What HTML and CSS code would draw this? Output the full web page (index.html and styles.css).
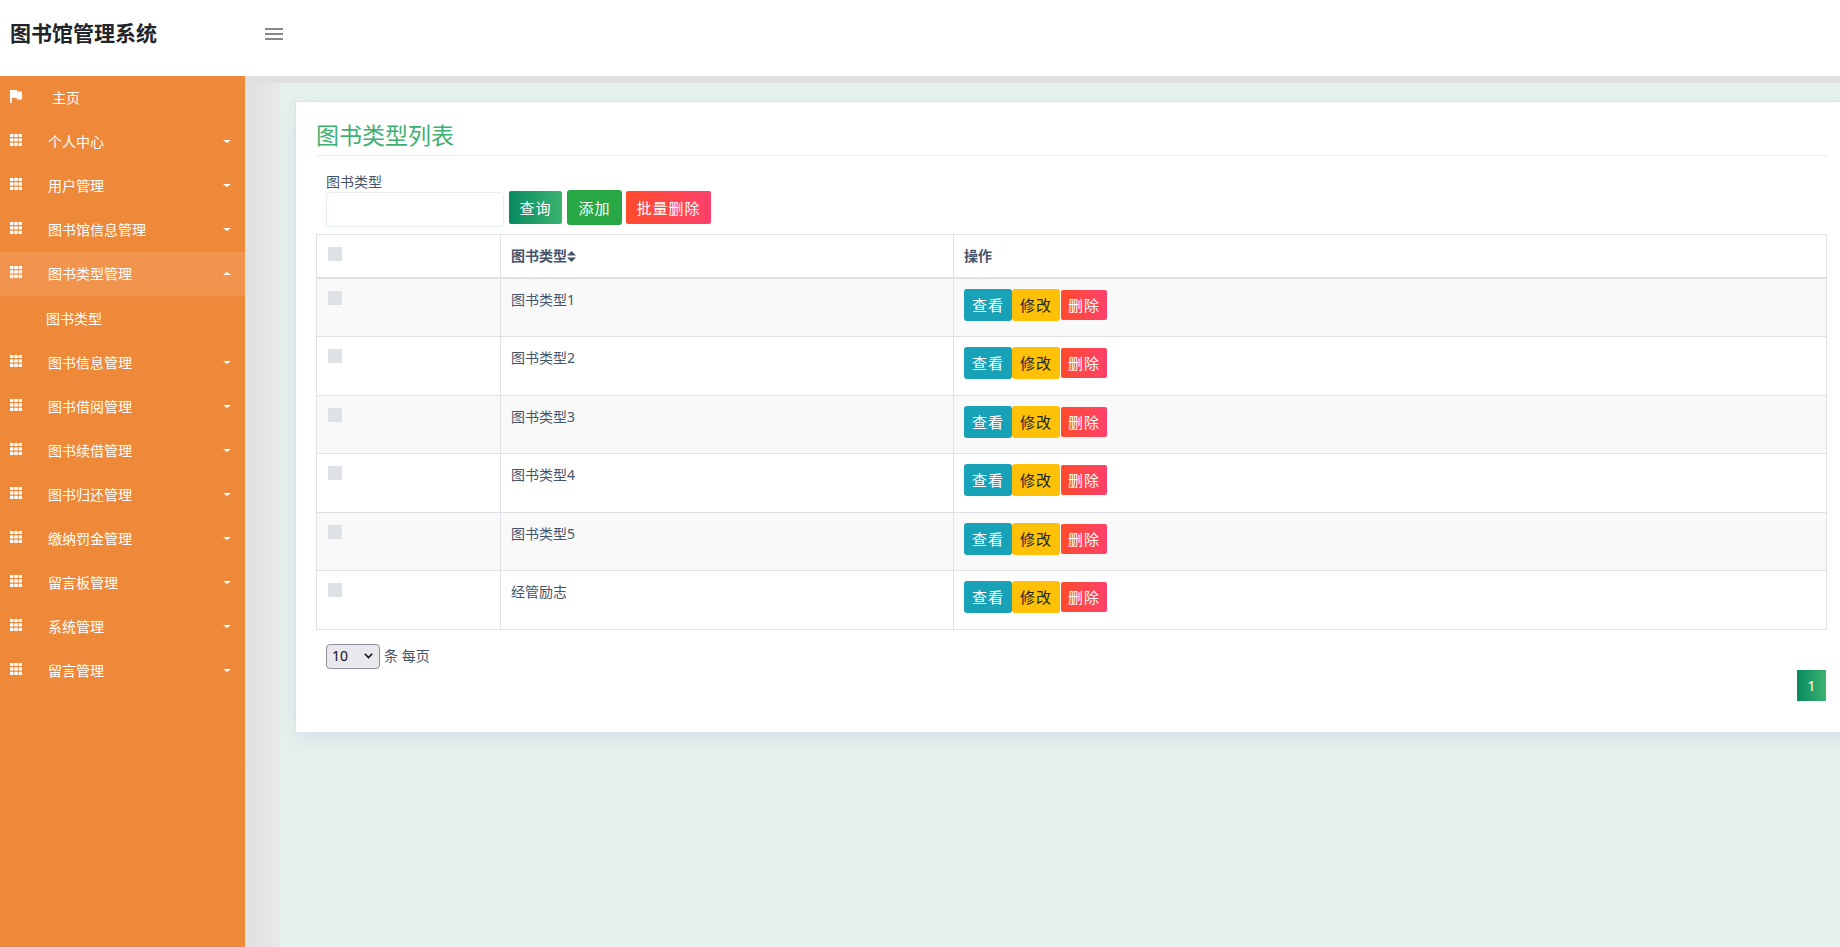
FILE: index.html
```
<!DOCTYPE html>
<html lang="zh-CN">
<head>
<meta charset="utf-8">
<title>图书馆管理系统</title>
<link rel="stylesheet" href="styles.css">
</head>
<body>
<svg class="defs" width="0" height="0">
  <symbol id="grid" viewBox="0 0 12 12"><path d="M0 0h3.4v3H0zM4.3 0h3.4v3H4.3zM8.6 0H12v3H8.6zM0 4.2h3.4v3.400H0zM4.3 4.2h3.4v3.400H4.3zM8.6 4.2H12v3.400H8.6zM0 8.8h3.4V12H0zM4.3 8.8h3.4V12H4.3zM8.6 8.8H12V12H8.6z"/></symbol>
</svg>
<header class="topbar">
  <h1 class="brand">图书馆管理系统</h1>
  <svg class="burger" viewBox="0 0 18 12"><path d="M0 0h18v2H0zM0 5h18v2H0zM0 10h18v2H0z"/></svg>
</header>
<div class="layout">
  <nav class="sidebar">
    <a class="item home"><svg class="icon flag" viewBox="0 0 12 13"><path d="M0 0h7l.4 1.6H12v7.8H7L6.600 7.800H1.700V13H0z"/></svg><span>主页</span></a>
    <a class="item"><svg class="icon"><use href="#grid"/></svg><span>个人中心</span><i class="caret"></i></a>
    <a class="item"><svg class="icon"><use href="#grid"/></svg><span>用户管理</span><i class="caret"></i></a>
    <a class="item"><svg class="icon"><use href="#grid"/></svg><span>图书馆信息管理</span><i class="caret"></i></a>
    <a class="item open"><svg class="icon"><use href="#grid"/></svg><span>图书类型管理</span><i class="caret"></i></a>
    <a class="subitem">图书类型</a>
    <a class="item"><svg class="icon"><use href="#grid"/></svg><span>图书信息管理</span><i class="caret"></i></a>
    <a class="item"><svg class="icon"><use href="#grid"/></svg><span>图书借阅管理</span><i class="caret"></i></a>
    <a class="item"><svg class="icon"><use href="#grid"/></svg><span>图书续借管理</span><i class="caret"></i></a>
    <a class="item"><svg class="icon"><use href="#grid"/></svg><span>图书归还管理</span><i class="caret"></i></a>
    <a class="item"><svg class="icon"><use href="#grid"/></svg><span>缴纳罚金管理</span><i class="caret"></i></a>
    <a class="item"><svg class="icon"><use href="#grid"/></svg><span>留言板管理</span><i class="caret"></i></a>
    <a class="item"><svg class="icon"><use href="#grid"/></svg><span>系统管理</span><i class="caret"></i></a>
    <a class="item"><svg class="icon"><use href="#grid"/></svg><span>留言管理</span><i class="caret"></i></a>
  </nav>
  <main class="page">
    <div class="content">
      <section class="card">
        <h2 class="title">图书类型列表</h2>
        <div class="filters">
          <label class="field"><span>图书类型</span><input class="text" type="text"></label>
          <button class="btn query">查询</button>
          <button class="btn add">添加</button>
          <button class="btn danger">批量删除</button>
        </div>
        <table class="list">
          <colgroup><col class="c-check"><col class="c-name"><col></colgroup>
          <thead><tr><th><i class="check"></i></th><th><div class="sort">图书类型<svg viewBox="0 0 9 11"><path d="M4.500 0L9 4.500H0zM0 6.500h9L4.500 11z"/></svg></div></th><th>操作</th></tr></thead>
          <tbody>
            <tr><td><i class="check"></i></td><td>图书类型1</td><td><div class="ops"><button class="op view">查看</button><button class="op edit">修改</button><button class="op del">删除</button></div></td></tr>
            <tr><td><i class="check"></i></td><td>图书类型2</td><td><div class="ops"><button class="op view">查看</button><button class="op edit">修改</button><button class="op del">删除</button></div></td></tr>
            <tr><td><i class="check"></i></td><td>图书类型3</td><td><div class="ops"><button class="op view">查看</button><button class="op edit">修改</button><button class="op del">删除</button></div></td></tr>
            <tr><td><i class="check"></i></td><td>图书类型4</td><td><div class="ops"><button class="op view">查看</button><button class="op edit">修改</button><button class="op del">删除</button></div></td></tr>
            <tr><td><i class="check"></i></td><td>图书类型5</td><td><div class="ops"><button class="op view">查看</button><button class="op edit">修改</button><button class="op del">删除</button></div></td></tr>
            <tr><td><i class="check"></i></td><td>经管励志</td><td><div class="ops"><button class="op view">查看</button><button class="op edit">修改</button><button class="op del">删除</button></div></td></tr>
          </tbody>
        </table>
        <div class="perpage"><span class="select">10<svg viewBox="0 0 9 6"><path d="M.8.8l3.700 3.700L8.200.8"/></svg></span><span>条 每页</span></div>
        <div class="pager"><a class="pg">1</a></div>
      </section>
    </div>
  </main>
</div>
</body>
</html>
```
FILE: styles.css
```
* { box-sizing: border-box; }
body { margin: 0; height: 947px; overflow: hidden; display: flex; flex-direction: column; font: 14px/20px "Noto Sans", "Noto Sans CJK SC", sans-serif; color: #455469; background: #e8e8e8; }
.defs { position: absolute; }
button, input { font: inherit; margin: 0; }
.topbar { flex: none; height: 76px; display: flex; align-items: flex-start; background: #fff; }
.brand { margin: 0; width: 265px; padding: 17px 0 0 10px; font-size: 21px; line-height: 32px; font-weight: 700; color: #212529; }
.burger { width: 18px; height: 12px; margin-top: 28px; fill: #888; }
.layout { flex: 1; display: flex; min-height: 0; }
.sidebar { flex: none; width: 245px; background: #ed8939; color: #fff; }
.item { display: flex; height: 44px; padding: 0 14px 0 10px; align-items: flex-start; }
.item span { margin: 12px 0 0 26px; flex: 1; }
.home span { margin-left: 30px; }
.icon { width: 12px; height: 12px; margin-top: 14px; fill: #fff; }
.flag { height: 13px; }
.caret { width: 0; margin-top: 20px; border: 0 solid transparent; border-width: 3px 4px 0; border-top-color: #fff; }
.open { background: #f1944d; }
.open .caret { border-width: 0 4px 3px; border-bottom-color: #fff; }
.subitem { display: block; height: 45px; padding: 13px 0 0 46px; }
.page { flex: 1; min-width: 0; padding: 7px 0 0 35px; background: linear-gradient(#e0e0e0, #e0e0e0) top / 100% 7px no-repeat, linear-gradient(90deg, #e0e0e0, #e9e8e8 35px); }
.content { height: 100%; padding: 18px 0 0 16px; background: #e6f3ec; overflow: hidden; }
.card { width: 1560px; height: 631px; background: #fff; border: 1px solid #d9e2e8; border-width: 1px 0 0 1px; padding: 17px 0 0 20px; margin-left: -1px; box-shadow: 0 8px 20px rgba(195, 192, 228, .42); }
.title { margin: 0 0 16px; width: 1512px; height: 37px; font-size: 23px; line-height: 33px; font-weight: 400; color: #3eb073; border-bottom: 1px solid #e9eeee; }
.filters { display: flex; align-items: flex-start; height: 62px; padding-left: 10px; }
.field { display: flex; flex-direction: column; width: 178px; margin-right: 5px; line-height: 20px; }
.text { width: 178px; height: 35px; border: 1px solid #e6f0ec; border-radius: 3px; padding: 6px; background: #fff; }
.btn { height: 33px; padding: 1px 0 0; margin-top: 19px; border: 0; border-radius: 2px; font-size: 15px; letter-spacing: 1px; line-height: 32px; color: #fff; }
.query { width: 53px; margin-right: 5px; background: linear-gradient(90deg, #078a60, #3cb371); }
.add { width: 55px; height: 35px; margin: 18px 4px 0 0; border-radius: 3px; line-height: 34px; background: #28a745; }
.danger { width: 85px; background: linear-gradient(90deg, #ff4b2b, #ff416c); }
.list { width: 1511px; table-layout: fixed; border-collapse: collapse; }
.c-check { width: 184px; }
.c-name { width: 453px; }
.list th, .list td { padding: 0 10px; border: 1px solid #dee2e6; text-align: left; vertical-align: top; }
.list th { height: 43.9px; padding-top: 11px; border-bottom-width: 2px; font-weight: 700; }
.list td { height: 58.5px; padding-top: 11px; }
.list td:last-child { padding-top: 10px; }
.list tbody tr:nth-child(odd) { background: #f9f9f9; }
.check { display: block; width: 14px; height: 14px; margin: 1px 0 0 1px; background: #dee2e6; }
.sort { display: flex; align-items: center; }
.sort svg { width: 9px; height: 11px; fill: #455469; }
.ops { display: flex; align-items: center; }
.op { width: 48px; height: 32px; padding: 0; border: 0; border-radius: 3px; font-size: 15px; letter-spacing: 1px; line-height: 32px; color: #fff; }
.view { background: #17a2b8; }
.edit { background: #ffc107; color: #212529; }
.del { width: 46px; height: 30px; margin-left: 1px; line-height: 30px; border-radius: 2px; background: linear-gradient(90deg, #ff4b2b, #ff416c); }
.perpage { display: flex; align-items: center; gap: 4px; height: 25px; margin: 14px 0 1px 10px; }
.select { display: flex; align-items: center; justify-content: space-between; width: 54px; height: 25px; padding: 0 6px 0 5px; border: 1px solid #8f8f9d; border-radius: 4px; background: #e9e9ed; color: #111; }
.select svg { width: 9px; height: 6px; fill: none; stroke: #111; stroke-width: 1.6; }
.pager { display: flex; justify-content: flex-end; width: 1510px; }
.pg { width: 29px; height: 31px; line-height: 31px; text-align: center; font-size: 14px; color: #fff; background: linear-gradient(90deg, #078a60, #3cb371); }
```
